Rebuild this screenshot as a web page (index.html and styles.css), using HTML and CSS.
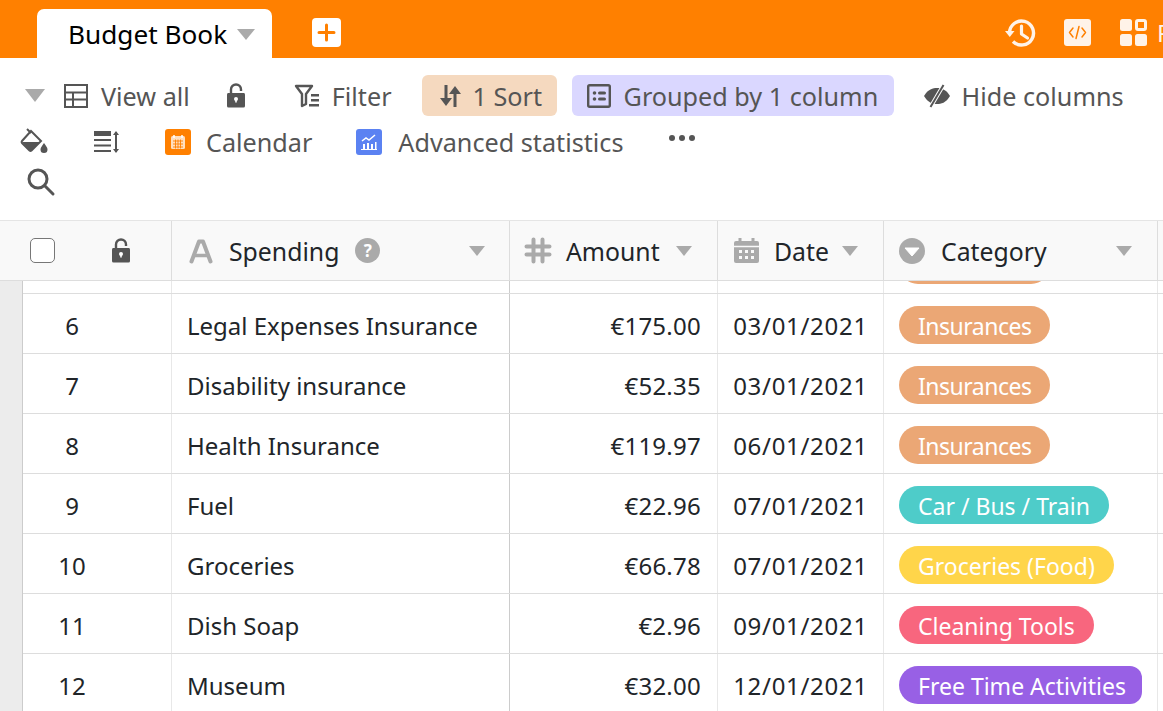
FILE: index.html
```html
<!DOCTYPE html>
<html>
	<head>
		<meta charset="UTF-8">
		<title>Budget Book</title>
		<link rel="stylesheet" href="styles.css">
	</head>
	<body>
		<header class="topbar">
			<div class="tab">
				<span class="tab-name">Budget Book</span>
				<span class="caret tab-caret"></span>
			</div>
			<button class="add-table">
				<svg width="19" height="19" viewBox="0 0 19 19"><path d="M9.500 2v15M2 9.500h15" stroke="#ff8000" stroke-width="3" stroke-linecap="round"/></svg>
			</button>
			<div class="top-actions">
				<svg class="history" width="30" height="30" viewBox="0 0 30 30"><path d="M3.500 15a12 12 0 1 1 3.500 8.500" fill="none" stroke="#fff3e8" stroke-width="3.400"/><path d="M-1 13h9.500L3.750 19z" fill="#fff3e8"/><path d="M15.500 8v8l6 4" fill="none" stroke="#fff3e8" stroke-width="3.200" stroke-linecap="round" stroke-linejoin="round"/></svg>
				<span class="code-btn">
					<svg width="19" height="15" viewBox="0 0 19 15"><path d="M5 3L1.500 7.500 5 12M14 3l3.500 4.500L14 12M11 1.500l-3 12" fill="none" stroke="#ff8000" stroke-width="1.500" stroke-linecap="round" stroke-linejoin="round"/></svg>
				</span>
				<svg class="apps" width="27" height="27" viewBox="0 0 27 27"><rect x="0" y="0" width="12" height="12" rx="2.500" fill="#fff3e8"/><rect x="16.500" y="1.500" width="9" height="9" rx="1.500" fill="none" stroke="#fff3e8" stroke-width="3"/><rect x="0" y="15" width="12" height="12" rx="2.500" fill="#fff3e8"/><rect x="15" y="15" width="12" height="12" rx="2.500" fill="#fff3e8"/></svg>
				<span class="plugins">Plugins</span>
			</div>
		</header>

		<section class="toolbar">
			<div class="tool-row row-one">
				<span class="caret view-caret"></span>
				<span class="tool view-all">
					<svg width="24" height="24" viewBox="0 0 24 24"><path d="M1 1h22v22H1zM1 8.500h22M1 15.500h22M9 8.500V23" fill="none" stroke="#555" stroke-width="2"/></svg>
					View all
				</span>
				<svg class="tool-lock" width="20" height="25" viewBox="0 0 20 25"><path d="M5 11V6.500a5 5 0 0 1 10 0V8" fill="none" stroke="#555" stroke-width="2.400"/><path d="M2 10h16a2 2 0 0 1 1 1.500V23a1.500 1.500 0 0 1-1.500 1.500h-15A1.500 1.500 0 0 1 1 23V11.500A2 2 0 0 1 2 10z" fill="#555"/><circle cx="10" cy="16" r="2" fill="#fff"/><path d="M9.200 16h1.600v3.500H9.200z" fill="#fff"/></svg>
				<span class="tool filter">
					<svg width="26" height="24" viewBox="0 0 26 24"><path d="M2 2h16l-6 8v10l-4 2V10z" fill="none" stroke="#555" stroke-width="2.400" stroke-linejoin="round"/><path d="M17 10h8v2.500h-8zM17 15h8v2.500h-8zM15 20h10v2.500H15z" fill="#555"/></svg>
					Filter
				</span>
				<span class="tool pill-btn sort-btn">
					<svg width="22" height="24" viewBox="0 0 22 24"><path d="M7 1v15M16 23V8" stroke="#555" stroke-width="3"/><path d="M1 14h12l-6 8zM10 10h12l-6-8z" fill="#555"/></svg>
					1 Sort
				</span>
				<span class="tool pill-btn group-btn">
					<svg width="24" height="24" viewBox="0 0 24 24"><rect x="1.200" y="1.200" width="21.600" height="21.600" rx="1.500" fill="none" stroke="#555" stroke-width="2.400"/><circle cx="7.500" cy="9" r="1.800" fill="#555"/><circle cx="7.500" cy="15" r="1.800" fill="#555"/><rect x="11" y="7.500" width="8" height="3" rx="1.500" fill="#555"/><rect x="11" y="13.500" width="8" height="3" rx="1.500" fill="#555"/></svg>
					Grouped by 1 column
				</span>
				<span class="tool hide-btn">
					<svg width="26" height="22" viewBox="0 0 26 22"><path d="M0 11C4 4 9 3 13 3 17 3 22 4 26 11 22 18 17 19 13 19 9 19 4 18 0 11z" fill="#555"/><path d="M19.500 0L6.500 22" stroke="#fff" stroke-width="4"/><path d="M19.500 0L6.500 22" stroke="#555" stroke-width="2"/></svg>
					Hide columns
				</span>
			</div>
			<div class="tool-row row-two">
				<svg class="paint" width="27" height="26" viewBox="0 0 27 26"><path d="M10 2L20 12 10.500 21.500a1.500 1.500 0 0 1-2 0L1 14a1.500 1.500 0 0 1 0-2z" fill="#fff" stroke="#555" stroke-width="2"/><path d="M1 13h18l-8.500 8.500a1.500 1.500 0 0 1-2 0z" fill="#555"/><path d="M6 0l4 4" stroke="#555" stroke-width="2"/><path d="M23 14c2 3 3.500 4.500 3.500 6.500a3.500 3.500 0 0 1-7 0c0-2 1.500-3.500 3.500-6.500z" fill="#555"/></svg>
				<svg class="row-height" width="26" height="24" viewBox="0 0 26 24"><path d="M0 1h17v5H0z" fill="#555"/><path d="M0 10h17M0 15.500h17M0 21h17" stroke="#555" stroke-width="2"/><path d="M22 2v20" stroke="#555" stroke-width="2"/><path d="M19 5l3-4 3 4zM19 19l3 4 3-4z" fill="#555"/></svg>
				<span class="tool plugin-calendar">
					<span class="plugin-icon icon-orange">
						<svg width="16" height="16" viewBox="0 0 16 16"><rect x="1" y="2" width="14" height="13" rx="1.500" fill="#fff" fill-opacity=".75"/><path d="M4 1v3M12 1v3" stroke="#fff" stroke-width="1.500"/><path d="M3 7h10M3 10h10M3 13h10M5.500 5.500v9M8 5.500v9M10.500 5.500v9" stroke="#ff8000" stroke-width=".9"/></svg>
					</span>
					Calendar
				</span>
				<span class="tool plugin-stats">
					<span class="plugin-icon icon-blue">
						<svg width="18" height="18" viewBox="0 0 18 18"><path d="M2 8l4-3 3 2 6-5" fill="none" stroke="#fff" stroke-width="1.500"/><path d="M3 11h2v5H3zM7 10h2v6H7zM11 11h2v5h-2zM15 9h1.500v7H15z" fill="#fff"/><path d="M1 16.500h16" stroke="#fff"/></svg>
					</span>
					Advanced statistics
				</span>
				<svg class="more" width="26" height="6" viewBox="0 0 26 6"><circle cx="3" cy="3" r="3" fill="#555"/><circle cx="13" cy="3" r="3" fill="#555"/><circle cx="23" cy="3" r="3" fill="#555"/></svg>
			</div>
			<div class="tool-row row-three">
				<svg width="28" height="28" viewBox="0 0 28 28"><circle cx="11" cy="11" r="9" fill="none" stroke="#555" stroke-width="3"/><path d="M18 18l8 8" stroke="#555" stroke-width="3" stroke-linecap="round"/></svg>
			</div>
		</section>

		<section class="table">
			<div class="grid-row head-row">
				<div class="cell index-head">
					<span class="checkbox"></span>
					<svg class="head-lock" width="20" height="25" viewBox="0 0 20 25"><path d="M5 11V6.500a5 5 0 0 1 10 0V8" fill="none" stroke="#555" stroke-width="2.400"/><path d="M2 10h16a2 2 0 0 1 1 1.500V23a1.500 1.500 0 0 1-1.500 1.500h-15A1.500 1.500 0 0 1 1 23V11.500A2 2 0 0 1 2 10z" fill="#555"/><circle cx="10" cy="16" r="2" fill="#fff"/><path d="M9.200 16h1.600v3.500H9.200z" fill="#fff"/></svg>
				</div>
				<div class="cell head-cell spending-head">
					<svg class="col-icon" width="24" height="24" viewBox="0 0 24 24"><path d="M2.500 22.500L10 2.500h4l7.500 20" fill="none" stroke="#aaa" stroke-width="4" stroke-linejoin="round" stroke-linecap="round"/><path d="M6 16.500h12" stroke="#aaa" stroke-width="3.500"/></svg>
					<span class="col-name">Spending</span>
					<span class="help">?</span>
					<span class="caret col-caret"></span>
				</div>
				<div class="cell head-cell amount-head">
					<svg class="col-icon" width="26" height="25" viewBox="0 0 26 25"><path d="M8.500 1.500v22M17.500 1.500v22M1.500 8.500h23M1.500 16.500h23" stroke="#aaa" stroke-width="4" stroke-linecap="round"/></svg>
					<span class="col-name">Amount</span>
					<span class="caret col-caret"></span>
				</div>
				<div class="cell head-cell date-head">
					<svg class="col-icon" width="25" height="25" viewBox="0 0 25 25"><path d="M2 3h21a2 2 0 0 1 2 2v18a2 2 0 0 1-2 2H2a2 2 0 0 1-2-2V5a2 2 0 0 1 2-2z" fill="#aaa"/><path d="M6 0v5M19 0v5" stroke="#aaa" stroke-width="3"/><path d="M0 8.500h25" stroke="#f9f9f9" stroke-width="1.500"/><path d="M5 12h3v3H5zM11 12h3v3h-3zM17 12h3v3h-3zM5 18h3v3H5zM11 18h3v3h-3zM17 18h3v3h-3z" fill="#f9f9f9"/></svg>
					<span class="col-name">Date</span>
					<span class="caret col-caret"></span>
				</div>
				<div class="cell head-cell category-head">
					<svg class="col-icon" width="26" height="26" viewBox="0 0 26 26"><circle cx="13" cy="13" r="13" fill="#aaa"/><path d="M6 10h14l-7 8z" fill="#fff" stroke="#fff" stroke-linejoin="round"/></svg>
					<span class="col-name">Category</span>
					<span class="caret col-caret push-right"></span>
				</div>
				<div class="cell"></div>
			</div>

			<div class="rows">
				<div class="gutter"></div>
				<div class="rows-scroll">
					<div class="grid-row data-row partial">
						<div class="cell"></div><div class="cell"></div><div class="cell"></div><div class="cell"></div>
						<div class="cell tag-cell"><span class="tag tag-insurance"></span></div><div class="cell"></div>
					</div>
					<div class="grid-row data-row">
						<div class="cell num">6</div><div class="cell">Legal Expenses Insurance</div><div class="cell amount">€175.00</div><div class="cell date">03/01/2021</div>
						<div class="cell tag-cell"><span class="tag tag-insurance">Insurances</span></div><div class="cell"></div>
					</div>
					<div class="grid-row data-row">
						<div class="cell num">7</div><div class="cell">Disability insurance</div><div class="cell amount">€52.35</div><div class="cell date">03/01/2021</div>
						<div class="cell tag-cell"><span class="tag tag-insurance">Insurances</span></div><div class="cell"></div>
					</div>
					<div class="grid-row data-row">
						<div class="cell num">8</div><div class="cell">Health Insurance</div><div class="cell amount">€119.97</div><div class="cell date">06/01/2021</div>
						<div class="cell tag-cell"><span class="tag tag-insurance">Insurances</span></div><div class="cell"></div>
					</div>
					<div class="grid-row data-row">
						<div class="cell num">9</div><div class="cell">Fuel</div><div class="cell amount">€22.96</div><div class="cell date">07/01/2021</div>
						<div class="cell tag-cell"><span class="tag tag-car">Car / Bus / Train</span></div><div class="cell"></div>
					</div>
					<div class="grid-row data-row">
						<div class="cell num">10</div><div class="cell">Groceries</div><div class="cell amount">€66.78</div><div class="cell date">07/01/2021</div>
						<div class="cell tag-cell"><span class="tag tag-food">Groceries (Food)</span></div><div class="cell"></div>
					</div>
					<div class="grid-row data-row">
						<div class="cell num">11</div><div class="cell">Dish Soap</div><div class="cell amount">€2.96</div><div class="cell date">09/01/2021</div>
						<div class="cell tag-cell"><span class="tag tag-clean">Cleaning Tools</span></div><div class="cell"></div>
					</div>
					<div class="grid-row data-row">
						<div class="cell num">12</div><div class="cell">Museum</div><div class="cell amount">€32.00</div><div class="cell date">12/01/2021</div>
						<div class="cell tag-cell"><span class="tag tag-free">Free Time Activities</span></div><div class="cell"></div>
					</div>
				</div>
			</div>
		</section>
	</body>
</html>
```

FILE: styles.css
```css
*, *:before, *:after {
	box-sizing: border-box;
}
html, body {
	height: 100%;
}
body {
	margin: 0;
	overflow: hidden;
	background: #fff;
	color: #212529;
	font-family: "Noto Sans", "Open Sans", sans-serif;
	font-size: 24px;
	display: flex;
	flex-direction: column;
}
svg {
	display: block;
	flex: none;
	overflow: visible;
}
.caret {
	display: block;
	flex: none;
	width: 0;
	height: 0;
	border-left: 9px solid transparent;
	border-right: 9px solid transparent;
	border-top: 11px solid #aaa;
}

/* top bar */
.topbar {
	flex: none;
	height: 58px;
	background: #ff8000;
	display: flex;
	align-items: flex-end;
	overflow: hidden;
	white-space: nowrap;
}
.tab {
	flex: none;
	width: 235px;
	height: 49px;
	margin-left: 37px;
	padding: 0 17px 0 31px;
	background: #fff;
	border-radius: 7px 7px 0 0;
	color: #000;
	font-size: 26.200px;
	display: flex;
	align-items: center;
	justify-content: space-between;
}
.tab-caret {
	margin-top: 2px;
}
.add-table {
	flex: none;
	width: 29px;
	height: 29px;
	margin: 0 0 11px 40px;
	padding: 0;
	border: 0;
	border-radius: 4px;
	background: #fff;
	display: flex;
	align-items: center;
	justify-content: center;
}
.top-actions {
	flex: none;
	height: 58px;
	padding-top: 7px;
	display: flex;
	align-items: center;
	margin-left: 665px;
	color: #fff3e8;
}
.code-btn {
	flex: none;
	width: 27px;
	height: 27px;
	margin-left: 28px;
	border-radius: 3px;
	background: #fff3e8;
	display: flex;
	align-items: center;
	justify-content: center;
}
.apps {
	margin-left: 29px;
}
.plugins {
	margin-left: 10px;
}

/* toolbar */
.toolbar {
	flex: none;
	height: 162px;
	padding-top: 17px;
	color: #555;
	font-size: 25.200px;
	white-space: nowrap;
}
.tool-row {
	display: flex;
	align-items: center;
}
.row-one {
	height: 41px;
}
.row-two {
	height: 40px;
	margin-top: 6px;
}
.row-three {
	height: 40px;
	padding-left: 27px;
}
.tool {
	display: flex;
	align-items: center;
	flex: none;
	gap: 13px;
}
.pill-btn {
	height: 41px;
	border-radius: 6px;
}
.view-caret {
	margin-left: 25px;
	border-left-width: 10px;
	border-right-width: 10px;
	border-top-width: 13px;
}
.view-all {
	margin-left: 19px;
}
.tool-lock {
	margin-left: 36px;
}
.filter {
	margin-left: 48px;
	gap: 12px;
}
.sort-btn {
	width: 135px;
	margin-left: 30px;
	padding-left: 17px;
	background: #f5d9bf;
	gap: 12px;
}
.group-btn {
	width: 322px;
	margin-left: 15px;
	padding-left: 15px;
	background: #dad7ff;
}
.hide-btn {
	margin-left: 30px;
	gap: 12px;
}
.paint {
	margin-left: 21px;
}
.row-height {
	margin-left: 46px;
}
.plugin-icon {
	flex: none;
	width: 26px;
	height: 26px;
	border-radius: 3px;
	display: flex;
	align-items: center;
	justify-content: center;
}
.icon-orange {
	background: #ff8000;
}
.icon-blue {
	background: #5b82f2;
}
.plugin-calendar {
	margin-left: 45px;
	gap: 15px;
}
.plugin-stats {
	margin-left: 44px;
	gap: 16px;
}
.more {
	margin: -9px 0 0 46px;
}

/* table */
.table {
	flex: 1;
	min-height: 0;
	display: flex;
	flex-direction: column;
}
.grid-row {
	display: grid;
	grid-template-columns: 172px 338px 208px 166px 274px 1fr;
}
.cell {
	display: flex;
	align-items: center;
	min-width: 0;
	padding: 0 16px;
	border-right: 1px solid #e8e8e8;
	white-space: nowrap;
}
.head-row {
	flex: none;
	height: 61px;
	background: #f9f9f9;
	font-size: 24.800px;
	border-top: 1px solid #e5e5e5;
	border-bottom: 1px solid #ddd;
}
.head-row .cell {
	border-right-color: #ddd;
}
.index-head {
	padding: 0 0 0 30px;
}
.checkbox {
	width: 25px;
	height: 25px;
	border: 1.500px solid #777;
	border-radius: 5px;
	background: #fff;
}
.head-lock {
	margin-left: 56px;
}
.col-icon {
	margin-right: 15px;
}
.spending-head .col-icon {
	margin-left: 1px;
	margin-right: 16px;
}
.amount-head {
	padding-left: 15px;
}
.category-head {
	padding-left: 15px;
}
.category-head .col-icon {
	margin-right: 16px;
}
.head-cell .col-caret {
	margin-left: 16px;
	border-left-width: 8px;
	border-right-width: 8px;
	border-top-width: 10px;
}
.date-head .col-caret {
	margin-left: 13px;
}
.head-cell .push-right {
	margin-left: auto;
	margin-right: 9px;
}
.head-cell .help {
	width: 25px;
	height: 25px;
	margin-left: 16px;
	margin-right: auto;
	border-radius: 50%;
	background: #aaa;
	color: #fff;
	font-size: 17px;
	font-weight: 700;
	line-height: 25px;
	text-align: center;
}
.head-cell .help + .col-caret {
	margin-right: 8px;
}
.rows {
	flex: 1;
	min-height: 0;
	display: flex;
}
.gutter {
	flex: none;
	width: 23px;
	background: #ececec;
	border-right: 1px solid #ccc;
}
.rows-scroll {
	flex: 1;
	min-width: 0;
	overflow: hidden;
}
.rows-scroll .grid-row {
	grid-template-columns: 149px 338px 208px 166px 274px 1fr;
}
.data-row {
	height: 60px;
	border-bottom: 1px solid #ddd;
}
.data-row .cell {
	padding-top: 4px;
}
.data-row .tag-cell {
	padding: 2px 0 0 15px;
}
.partial {
	height: 13px;
	grid-template-rows: 12px;
	overflow: hidden;
}
.partial .cell,
.partial .tag-cell {
	align-items: flex-end;
	padding-top: 0;
	padding-bottom: 9px;
}
.data-row .cell:nth-child(2) {
	padding-left: 15px;
	border-right-color: #ccc;
}
.num {
	justify-content: center;
	padding: 0 50px 0 0;
}
.amount {
	justify-content: flex-end;
	letter-spacing: .25px;
}
.date {
	justify-content: center;
	padding: 0;
	letter-spacing: .7px;
}
.tag {
	flex: none;
	height: 38px;
	padding: 0 19px;
	border-radius: 19px;
	color: #fff;
	font-size: 23px;
	line-height: 40px;
}
.tag-insurance {
	width: 151px;
	background: #eba775;
	letter-spacing: -.5px;
}
.tag-car {
	background: #4eccc9;
}
.tag-food {
	background: #ffd54a;
}
.tag-clean {
	background: #f8667e;
}
.tag-free {
	width: 243px;
	overflow: hidden;
	background: #9860e5;
	border-radius: 19px 12px 12px 19px;
}
```
